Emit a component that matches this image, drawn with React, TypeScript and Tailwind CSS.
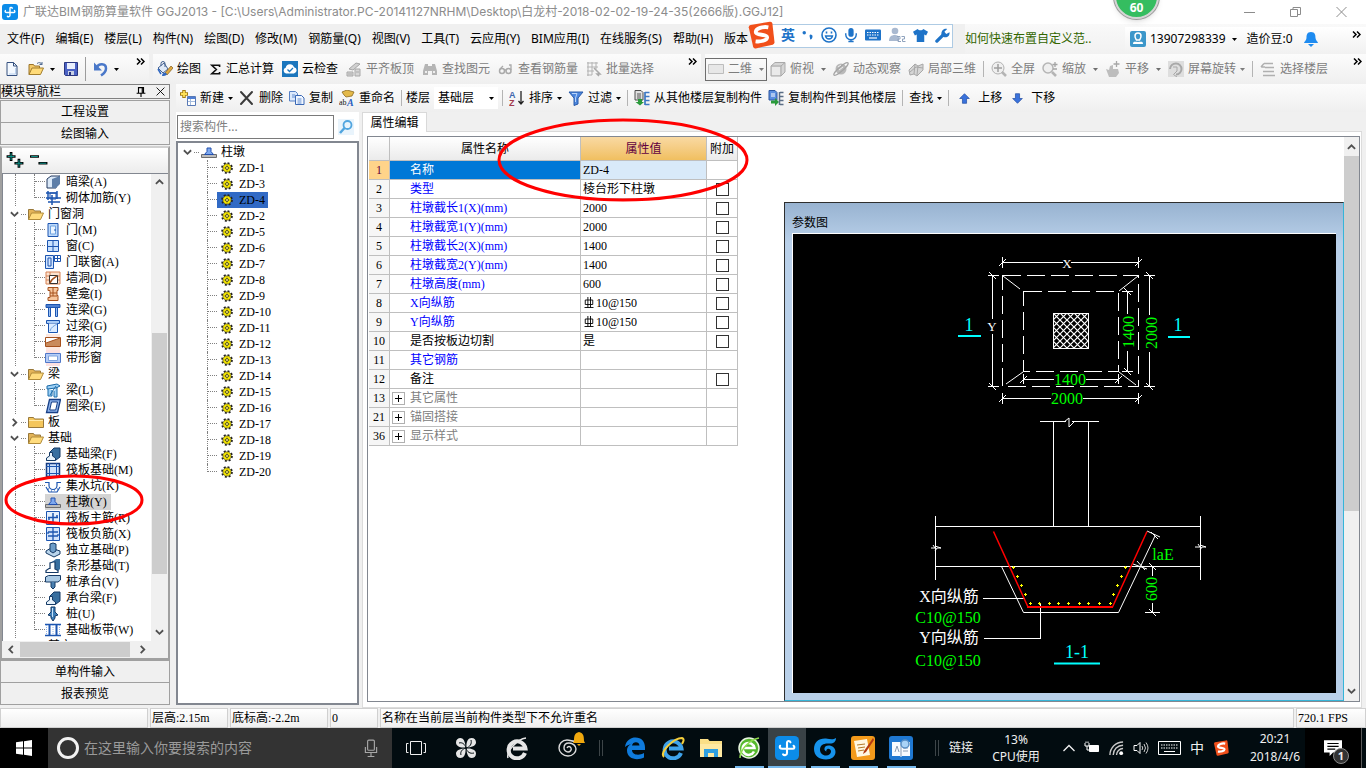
import { useState } from 'react';
import type { ReactNode } from 'react';

const Svg = ({ children, className = 'h-4 w-4' }: { children: ReactNode; className?: string }) => (
  <svg className={`shrink-0 ${className}`} viewBox="0 0 16 16" fill="none" aria-hidden="true">{children}</svg>
);

const Caret = () => (
  <svg className="h-[3px] w-[5px] shrink-0" viewBox="0 0 5 3" aria-hidden="true"><path d="M0 0h5L2.5 3z" fill="currentColor" /></svg>
);

const More = () => (
  <svg className="h-[7px] w-[9px] shrink-0" viewBox="0 0 9 7" fill="none" stroke="#000" strokeWidth="1.5" aria-hidden="true">
    <path d="M1 .5l3 3-3 3M5 .5l3 3-3 3" />
  </svg>
);

const Sep = () => <span className="h-4 w-px shrink-0 bg-[#b4b4b4]" />;

const Chevron = ({ dir, className = 'h-[9px] w-[9px]' }: { dir: 'up' | 'down' | 'left' | 'right'; className?: string }) => {
  const paths = { up: 'M1 6.5l4-4 4 4', down: 'M1 2.5l4 4 4-4', left: 'M6.5 1l-4 4 4 4', right: 'M3 1l4 4-4 4' };
  return (
    <svg className={`shrink-0 ${className}`} viewBox="0 0 10 10" fill="none" stroke="#505050" strokeWidth="2" aria-hidden="true">
      <path d={paths[dir]} />
    </svg>
  );
};

const Logo = ({ className }: { className?: string }) => (
  <Svg className={className}>
    <rect width="16" height="16" rx="3" fill="#0c8ce9" />
    <path d="M10.300 4.200C10 3.200 8 2.800 8 4.500V11.300c0 1.500-1.800 1.900-2.600.9M3.400 6.500C2.600 8 3.600 8.500 4.800 8.500h6.900c1.400 0 1.500-1.300.7-2" stroke="#fff" strokeWidth="1.400" strokeLinecap="round" />
  </Svg>
);

const Sogou = ({ className }: { className?: string }) => (
  <Svg className={className}>
    <path d="M1 3.500Q1 2.500 2 2.300L13 .4q1.300-.2 1.500 1l1.200 10.500q.1 1.300-1 1.600L5 15.700q-1.200.2-1.500-1z" fill="#f1501b" />
    <path d="M12.200 3.600C9 3 5.200 4.300 5 6.200c-.1 2.300 6.600 1 6.500 3.200-.2 1.700-3.700 2.600-6.600 2.200" stroke="#fff" strokeWidth="2.200" />
  </Svg>
);

const DocIcon = () => <Svg><path d="M3 1.500h6.500L13 5v9.500H3z" fill="#f4f9ff" stroke="#35507f" /><path d="M9.500 1.500V5H13" stroke="#35507f" /><path d="M5 13h6.500V7" stroke="#b9d0ee" /></Svg>;
const OpenIcon = () => (
  <Svg><path d="M1 13.500V3.500h4.500l1 1.500h5v2" fill="#f3c969" stroke="#9b742a" /><path d="M1 13.500L4 7h11.500l-3 6.500z" fill="#ffdb79" stroke="#a27d2c" /><path d="M9 2.500c2-1.500 4-1 5 1m0 0V1m0 2.500h-2.500" stroke="#4f6a91" /></Svg>
);
const SaveIcon = () => <Svg><path d="M1.500 1.500h13v13h-12l-1-1z" fill="#4b62c4" stroke="#29357f" /><path d="M4 2h8v6H4z" fill="#e9effc" /><path d="M5 10h6v4H5z" fill="#c8d0e4" /><path d="M6 11h2v3H6z" fill="#29357f" /></Svg>;
const UndoIcon = () => <Svg><path d="M2 1.500v8h8z" fill="#4a78c9" /><path d="M4.500 7c2-5 9.500-5 9.500.5 0 3-2 5-5 7" stroke="#4a78c9" strokeWidth="2.500" /></Svg>;
const PaintIcon = () => (
  <Svg><path d="M1 7l6-5 4 6-5 4z" fill="#dfe9f7" stroke="#42608f" /><path d="M4 5V2.500a2 2 0 014 0V6" stroke="#42608f" /><path d="M8 12l6-7 2 2-6 7z" fill="#e1aa3e" stroke="#7c5a20" strokeWidth=".7" /><path d="M5 15c0-3 2-4 4-3l1 1c-1 2-3 2-5 2z" fill="#2f67c1" /><path d="M1 8l3 5" stroke="#2f67c1" strokeWidth="1.500" /></Svg>
);
const SigmaIcon = () => <Svg className="h-[15px] w-[13px]"><path d="M13 5V2.800H3.500L9 8l-5.500 5.200H13V11" stroke="#111" strokeWidth="2" /></Svg>;
const CloudIcon = () => <Svg><rect width="16" height="16" fill="#1b76bd" /><path d="M4 12.500a3 3 0 01-.3-5.800 4.300 4.300 0 018.300-.5 3.200 3.200 0 010 6.300z" fill="#fff" /><path d="M5.500 8.500l2 2 3.500-3.500" stroke="#1b76bd" strokeWidth="1.300" /></Svg>;
const SlabTopIcon = () => <Svg><path d="M3 8l7-6 4 1-7 6z" fill="#d0d0d0" stroke="#a5a5a5" /><path d="M1 11h6v4H1zM9 8h5v7H9z" fill="#d6d6d6" stroke="#a7a7a7" /><path d="M2 13h4M10 11h3" stroke="#aaa" /></Svg>;
const BinocIcon = () => <Svg><path d="M3 3h3v2h4V3h3l2 7v4h-5v-4H6v4H1v-4z" fill="#b5b5b5" /><path d="M3 11h2M11 11h2" stroke="#eee" strokeWidth="2" /></Svg>;
const GlassesIcon = () => <Svg><circle cx="4" cy="10" r="2.500" stroke="#aaa" strokeWidth="1.500" /><circle cx="10.500" cy="10" r="2.500" stroke="#aaa" strokeWidth="1.500" /><path d="M2 8l3-3M13 9V4h-2M6 9h2" stroke="#aaa" strokeWidth="1.300" /></Svg>;
const BatchIcon = () => <Svg><path d="M1 2h11M1 6h11M1 10h7M1 14h5M2 1v14M6 1v13M10 1v7" stroke="#b2b2b2" /><path d="M8 7l6 6h-3l2 2" stroke="#a8a8a8" strokeWidth="1.500" /></Svg>;
const PlaneIcon = () => <Svg><path d="M.5 3.500h15v9H.5z" fill="#e7e7e7" stroke="#bdbdbd" /></Svg>;
const CubeIcon = () => <Svg><path d="M1 5l4-3.500h10V11l-4 4H1z" fill="#d5d5d5" stroke="#a9a9a9" /><path d="M1 5h10v10M11 5l4-3.500" stroke="#a9a9a9" /><path d="M2 6h8v8H2z" fill="#eaeaea" /></Svg>;
const OrbitIcon = () => <Svg><circle cx="8" cy="8" r="5.500" fill="#b9b9b9" /><path d="M1 14c-2-2 12-14 14-12s-12 14-14 12z" stroke="#a4a4a4" strokeWidth="1.300" /><path d="M5 6l3-2M6 9l4-3" stroke="#eee" /></Svg>;
const LocalIcon = () => <Svg><path d="M1 9l6-6 3 2 5-2v6l-6 6-3-2-4 1z" fill="#d6d6d6" stroke="#a8a8a8" /><path d="M7 3l-1 10M10 5l-1 9M2 11l6-5 7 1" stroke="#a8a8a8" /></Svg>;
const FullIcon = () => <Svg><circle cx="7" cy="7" r="6" fill="#efefef" stroke="#b2b2b2" /><path d="M7 3v8M3 7h8" stroke="#a0a0a0" strokeWidth="1.500" /><path d="M11 11l4 4" stroke="#b5b5b5" strokeWidth="2.500" /></Svg>;
const ZoomIcon = () => <Svg><circle cx="6" cy="7" r="5" fill="#efefef" stroke="#b5b5b5" strokeWidth="1.500" /><path d="M10 11l4 4" stroke="#b5b5b5" strokeWidth="2.500" /><path d="M13 1v5M10.500 3.500h5M11 8h4" stroke="#a5a5a5" strokeWidth="1.300" /></Svg>;
const PanIcon = () => <Svg><path d="M1 8l3 1 1-4 3-1v4l5 0 1 4-3 4H4z" fill="#bdbdbd" /><path d="M11.500 0v6M8.500 3h6" stroke="#a7a7a7" strokeWidth="1.300" /></Svg>;
const RotateIcon = () => <Svg><path d="M0 0h16v16H0z" fill="#dedede" /><path d="M2 8a6 6 0 016-5.500A5.500 5.500 0 0113.500 8 5.500 5.500 0 018 13.500" stroke="#a8a8a8" strokeWidth="2" /><path d="M9 10l-3.500 3.500L9 16M5 6h4v4" stroke="#a8a8a8" /></Svg>;
const FloorIcon = () => <Svg><path d="M4 2.500h9M5 6.500h9M5 10.500h9M5 14.500h10M1 6l3-3.500M1 6h4M3 10.500h2M3 14.500h2" stroke="#b0b0b0" strokeWidth="1.500" /></Svg>;
const NewIcon = () => <Svg><path d="M4 0v8M0 4h8" stroke="#a57f14" strokeWidth="3.500" /><path d="M4 1v6M1 4h6" stroke="#ffe259" strokeWidth="1.800" /><path d="M7.500 6.500h8v9h-8z" fill="#fff" stroke="#5879b5" /><path d="M8 7h7v2H8z" fill="#4f7fd4" /><path d="M8 11.500h7M10.500 9v6" stroke="#a5bcde" /></Svg>;
const DeleteIcon = () => <Svg><path d="M2 2l11 12M13 2L2 14" stroke="#3b3b3b" strokeWidth="2" strokeLinecap="round" /></Svg>;
const CopyIcon = () => <Svg><path d="M.5 1.500h6l2 2V11h-8z" fill="#dce9fc" stroke="#5681c6" /><path d="M6.500 5.500h6l2.500 2.500v6.500H6.500z" fill="#f2f7ff" stroke="#3a68b5" /><path d="M8.500 9h4M8.500 11h4M8.500 13h4M3 5h3M3 7h3" stroke="#5f8bd0" /></Svg>;
const RenameIcon = () => (
  <Svg>
    <path d="M3 2l5-2 7 2-2 4-6 1-2-2z" fill="#e3b94a" stroke="#8b6a20" strokeWidth=".8" />
    <text x="0" y="15" fontSize="8" fontFamily="Liberation Serif" fill="#111">ab</text>
    <text x="8" y="15.500" fontSize="10" fontWeight="700" fontStyle="italic" fontFamily="Liberation Serif" fill="#2a5fc0">A</text>
  </Svg>
);
const SortIcon = () => (
  <Svg>
    <text x="0" y="7.500" fontSize="9" fontWeight="700" fontFamily="Liberation Sans" fill="#3e67ad">A</text>
    <text x="0" y="15.500" fontSize="9" fontWeight="700" fontFamily="Liberation Sans" fill="#a13a4e">Z</text>
    <path d="M12 1v12M9.500 11l2.500 3 2.500-3" stroke="#222" strokeWidth="1.300" />
  </Svg>
);
const FilterIcon = () => <Svg><path d="M1 2h14l-5 6v6l-4 1.500V8z" fill="#4c86dd" stroke="#295aa9" /><path d="M4 3.500h5L7.500 8v4" stroke="#b9d5fb" /></Svg>;
const CopyFromIcon = () => (
  <Svg><path d="M1 .5h6l2 2V10H1z" fill="#e0e0e0" stroke="#4f4f4f" /><path d="M3 4h4M3 6h4M3 8h4" stroke="#555" /><path d="M6 15.500L1.500 12H4V9h4v3h2z" fill="#2a9a3b" /><path d="M11 2.500h4.500M11 6.500h4.500M11 10.500h4.500M11 14.500h4.500M11 2v13" stroke="#3c78c4" strokeWidth="1.700" /></Svg>
);
const CopyToIcon = () => (
  <Svg><path d="M1 .5h6l2 2V10H1z" fill="#5a8fe0" stroke="#2c57a0" /><path d="M3 4h4M3 6h4" stroke="#fff" /><path d="M3 10.500h4V8l4 4-4 4v-2.500H3z" fill="#2a9a3b" /><path d="M12 2.500h3.500M12 6.500h3.500M12 10.500h3.500M12 14.500h3.500M11.500 2v13" stroke="#5a6d85" strokeWidth="1.500" /></Svg>
);
const UpIcon = () => <Svg className="h-[11px] w-[11px]"><path d="M8 1l7 7h-4v7H5V8H1z" fill="#3a72dc" stroke="#1f4aa0" /></Svg>;
const DownIcon = () => <Svg className="h-[11px] w-[11px]"><path d="M8 15l7-7h-4V1H5v7H1z" fill="#3a72dc" stroke="#1f4aa0" /></Svg>;
const FolderOpen = () => <Svg><path d="M.5 13.500v-10h5l1 1.500h6v2.500" fill="#e3b458" stroke="#98783a" /><path d="M.5 13.500L3.500 7h12l-3 6.500z" fill="#ffdc7e" stroke="#b08b3a" /></Svg>;
const FolderClosed = () => <Svg><path d="M.5 13.500v-10h5l1 1.500h9v8.500z" fill="#f4c65b" stroke="#98783a" /><path d="M1 6.500h14" stroke="#ffe9a8" /></Svg>;
const PierIcon = () => <Svg><path d="M.5 10.500h15v3H.5z" fill="#bcbcbc" stroke="#6d6d6d" /><path d="M3.500 10.500l2.500-3V4h4v3.500l2.500 3z" fill="#7ea8ee" stroke="#2350ae" /></Svg>;
const GearIcon = () => (
  <Svg className="h-3 w-3">
    <circle cx="8" cy="8" r="6.500" stroke="#222" strokeWidth="2.600" strokeDasharray="2.600 2.500" />
    <circle cx="8" cy="8" r="5.600" fill="#f8ea00" stroke="#222" strokeWidth=".7" />
    <path d="M8 3v10M3 8h10" stroke="#8a7d00" strokeWidth=".7" />
    <circle cx="8" cy="8" r="2" fill="#fff46b" stroke="#222" />
  </Svg>
);

const b = '#1c55b0';
const o = '#a5501c';
const navIcons: Record<string, ReactNode> = {
  beam: <Svg><path d="M2 5l4-3h9l-4 3v9H2z" fill="#dbe9f8" stroke="#23395f" /><path d="M7 5l8-3v8l-4 4H7z" fill="#5d7ea8" /></Svg>,
  brick: <Svg><path d="M1 3h11M1 8h15M3 12h12M3 1v9M12 1v8M7 5v10" stroke={b} strokeWidth="1.500" /><path d="M5 3h6v6H5z" stroke={b} /></Svg>,
  door: <Svg><path d="M3 1.500h10v13H3z" fill="#bcd9fb" stroke={b} /><path d="M5.500 4h5v8h-5z" fill="#eaf4ff" stroke="#6ea3e0" /><path d="M10 7v2" stroke={b} /></Svg>,
  window: <Svg><path d="M2.500 2.500h11v11h-11z" fill="#c9e2ff" stroke={b} /><path d="M8 2v12M2 8.500h12" stroke={b} /></Svg>,
  doorWindow: <Svg><path d="M.5 1.500h8v13h-8z" fill="#d4e6ff" stroke={b} /><path d="M9.500 1.500h6v6h-6zM12.500 1v7M9 4.500h7M3 4h3v8H3z" stroke={b} /></Svg>,
  wallHole: <Svg><path d="M1 2h14v12H1z" fill="#fbe3d0" stroke="#d78153" /><path d="M1 6h14M1 10h14M5 2v4M10 10v4" stroke="#d78153" /><path d="M4.500 5.500h8v8h-8z" fill="#fff" stroke="#333" /><path d="M5 13c1-4 4-5 7-7" stroke={o} strokeWidth="1.500" /></Svg>,
  niche: <Svg><path d="M3 1.500h10v3h-1v5h1v5H3v-3h2v-7H3z" fill="#f7c79e" stroke={o} /><path d="M5 7h7M5 10h7M8 2v8" stroke={o} /></Svg>,
  link: <Svg><path d="M1 2.500h14v3H1z" fill="#4c7fd0" stroke={b} /><path d="M3.500 6v8.500h2V6M10.500 6v8.500h2V6" fill="#9cc2f5" stroke={b} /></Svg>,
  lintel: <Svg><path d="M1.500 2.500h13v3h-13z" fill="#a9cbf5" stroke={b} /><path d="M3.500 5.500v9h9v-9" fill="#dcebff" stroke={b} /><path d="M5 13c1-4 4-5 7-7" stroke="#6ea3e0" /></Svg>,
  stripHole: <Svg><path d="M1 0h14v16H1z" fill="#fde8e0" /><path d="M.5 3.500h15v9H.5z" fill="#fff" stroke={o} /><path d="M1 12V9l14-5v8z" fill="#c98b5c" /><path d="M1 9l14-5" stroke={o} /></Svg>,
  stripWindow: <Svg><path d="M1 0h14v16H1z" fill="#fde1e1" /><path d="M.5 3.500h15v9H.5z" fill="#b5cdf7" stroke="#5078c8" /><path d="M3.500 6h9v4.500h-9z" fill="#fff" stroke="#7fa2de" /></Svg>,
  beamL: <Svg><path d="M2 4l10-2 3 2-4 2-9 1zM3 7v7h4V8M9 9v6h3V5" fill="#9cd0f6" stroke="#1b6aa8" /><path d="M5 13l6-9" stroke="#1b6aa8" /></Svg>,
  ring: <Svg><path d="M4.500 1.500h11l-3 13h-11z" fill="#8eb4ec" stroke="#173f86" strokeWidth="1.300" /><path d="M6.500 4h6l-1.800 8H4.700z" fill="#fff" stroke="#173f86" /></Svg>,
  foundBeam: <Svg><path d="M1 14l4-4V6l4-4h6v9l-4 3z" fill="#386f9f" stroke="#153a66" /><path d="M1.500 14.500V12l3-2V6.500h3V10l3 2v2.500z" fill="#e8f3fb" stroke="#153a66" /></Svg>,
  raft: <Svg><path d="M1.500 1.500h13v13h-13z" fill="#cfe2fb" stroke="#153a80" strokeWidth="1.500" /><path d="M4.500 4.500h7v7h-7zM4.500 1v14M11.500 1v14M1 4.500h14M1 11.500h14" stroke={b} /></Svg>,
  pit: <Svg><path d="M0 4.500h4v3a4 4 0 008 0v-3h4M1 9l3 5h8l3-5" stroke={b} strokeWidth="1.200" /><path d="M3 11h1M6 13h1M9 12h1M12 11h1" stroke={b} /></Svg>,
  pier: <PierIcon />,
  rebarMain: <Svg><path d="M1.500 1.500h13v13h-13z" fill="#e6f0fd" stroke={b} /><path d="M8 3v10M3 7.500h10M4 7v3M12 5v3" stroke={b} strokeWidth="1.500" /></Svg>,
  rebarNeg: <Svg><path d="M1.500 1.500h13v13h-13z" fill="#d3e4fb" stroke={b} /><path d="M8 1v14M3 6h10M3 10h10M3 6v2M13 10v-2" stroke={b} strokeWidth="1.300" /></Svg>,
  isolated: <Svg><path d="M1 9l5-3 9 3v3l-6 3-8-4z" fill="#b9d5ec" stroke="#153a66" /><path d="M5 2l3-1 3 1v7l-3 2-3-2z" fill="#6c9cc8" stroke="#153a66" /></Svg>,
  strip: <Svg><path d="M7 4l4-3h4v10l-3 3z" fill="#386f9f" /><path d="M1 14.500v-2l3-2h1V5l3-1h2v7l3 1.500v2z" fill="#fff" stroke="#153a66" strokeWidth="1.200" /></Svg>,
  cap: <Svg><path d="M.5 3l3-1.500h12V6L13 8H.5z" fill="#a9c9e4" stroke="#153a66" /><path d="M6 8v5l2 2 2-2V8" fill="#4a80b0" stroke="#153a66" /></Svg>,
  pile: <Svg><path d="M6 1h4v5l3 3-3 1v2l-2 3-2-3v-2L3 9l3-3z" fill="#3d7eb8" stroke="#153a66" /><path d="M7.500 2v9" stroke="#c8e4fb" /></Svg>,
  band: <Svg><path d="M0 2.500h16M0 13.500h16" stroke={b} strokeWidth="1.500" /><path d="M4.500 3v10M11.500 3v10" stroke={b} strokeWidth="2" /><path d="M8 3v10M1.500 3v10M14.500 3v10" stroke="#8eb4ec" strokeDasharray="1 1" /></Svg>,
};

type NavItem = { label: string; icon?: string; last?: boolean; open?: boolean };

const navItems: NavItem[] = [
  { label: '暗梁(A)', icon: 'beam' },
  { label: '砌体加筋(Y)', icon: 'brick', last: true },
  { label: '门窗洞', open: true },
  { label: '门(M)', icon: 'door' },
  { label: '窗(C)', icon: 'window' },
  { label: '门联窗(A)', icon: 'doorWindow' },
  { label: '墙洞(D)', icon: 'wallHole' },
  { label: '壁龛(I)', icon: 'niche' },
  { label: '连梁(G)', icon: 'link' },
  { label: '过梁(G)', icon: 'lintel' },
  { label: '带形洞', icon: 'stripHole' },
  { label: '带形窗', icon: 'stripWindow', last: true },
  { label: '梁', open: true },
  { label: '梁(L)', icon: 'beamL' },
  { label: '圈梁(E)', icon: 'ring', last: true },
  { label: '板', open: false },
  { label: '基础', open: true },
  { label: '基础梁(F)', icon: 'foundBeam' },
  { label: '筏板基础(M)', icon: 'raft' },
  { label: '集水坑(K)', icon: 'pit' },
  { label: '柱墩(Y)', icon: 'pier' },
  { label: '筏板主筋(R)', icon: 'rebarMain' },
  { label: '筏板负筋(X)', icon: 'rebarNeg' },
  { label: '独立基础(P)', icon: 'isolated' },
  { label: '条形基础(T)', icon: 'strip' },
  { label: '桩承台(V)', icon: 'cap' },
  { label: '承台梁(F)', icon: 'foundBeam' },
  { label: '桩(U)', icon: 'pile' },
  { label: '基础板带(W)', icon: 'band', last: true },
  { label: '其它', open: false },
];

const components = [1, 3, 4, 2, 5, 6, 7, 8, 9, 10, 11, 12, 13, 14, 15, 16, 17, 18, 19, 20];

const menus = ['文件(F)', '编辑(E)', '楼层(L)', '构件(N)', '绘图(D)', '修改(M)', '钢筋量(Q)', '视图(V)', '工具(T)', '云应用(Y)', 'BIM应用(I)', '在线服务(S)', '帮助(H)', '版本'];

type Row = { no: number; name: string; value?: string; check?: boolean; tone: 'sel' | 'blue' | 'black' | 'gray'; rebar?: boolean };

const rows: Row[] = [
  { no: 1, name: '名称', value: 'ZD-4', tone: 'sel' },
  { no: 2, name: '类型', value: '棱台形下柱墩', check: true, tone: 'blue' },
  { no: 3, name: '柱墩截长1(X)(mm)', value: '2000', check: true, tone: 'blue' },
  { no: 4, name: '柱墩截宽1(Y)(mm)', value: '2000', check: true, tone: 'blue' },
  { no: 5, name: '柱墩截长2(X)(mm)', value: '1400', check: true, tone: 'blue' },
  { no: 6, name: '柱墩截宽2(Y)(mm)', value: '1400', check: true, tone: 'blue' },
  { no: 7, name: '柱墩高度(mm)', value: '600', check: true, tone: 'blue' },
  { no: 8, name: 'X向纵筋', value: '10@150', check: true, tone: 'blue', rebar: true },
  { no: 9, name: 'Y向纵筋', value: '10@150', check: true, tone: 'blue', rebar: true },
  { no: 10, name: '是否按板边切割', value: '是', check: true, tone: 'black' },
  { no: 11, name: '其它钢筋', tone: 'blue' },
  { no: 12, name: '备注', check: true, tone: 'black' },
  { no: 13, name: '其它属性', tone: 'gray' },
  { no: 21, name: '锚固搭接', tone: 'gray' },
  { no: 36, name: '显示样式', tone: 'gray' },
];

const tones = {
  sel: 'bg-[#0078d7] text-white',
  blue: 'text-[#0000ff]',
  black: 'text-black',
  gray: 'text-[#808080]',
};

function Tool({ icon, label, caret, off }: { icon?: ReactNode; label: string; caret?: boolean; off?: boolean }) {
  return (
    <button className={`flex shrink-0 items-center gap-1 whitespace-nowrap ${off ? 'text-[#7d7d7d]' : 'text-black'}`}>
      {icon}
      {label}
      {caret && <Caret />}
    </button>
  );
}

function TitleBar() {
  return (
    <header className="flex h-6 shrink-0 items-center bg-white pl-0.5 text-[#8c8c8c]">
      <Logo className="h-4 w-4" />
      <h1 className="ml-[5px] flex-1 truncate font-['Inter','Noto_Sans_CJK_SC',sans-serif]">广联达BIM钢筋算量软件 GGJ2013 - [C:\Users\Administrator.PC-20141127NRHM\Desktop\白龙村-2018-02-02-19-24-35(2666版).GGJ12]</h1>
      <div className="flex gap-[35px] pr-[19px] text-[#8c8c8c]">
        <button aria-label="最小化"><svg className="h-3 w-[11px]" viewBox="0 0 11 12" stroke="currentColor"><path d="M0 6.500h11" /></svg></button>
        <button aria-label="还原"><svg className="h-3 w-[11px]" viewBox="0 0 11 12" fill="none" stroke="currentColor"><path d="M.5 3.500h7v7h-7zM3 3V1.500h7.500v7H8" /></svg></button>
        <button aria-label="关闭"><svg className="h-3 w-[11px]" viewBox="0 0 11 12" stroke="currentColor"><path d="M.5 1l10 10M10.500 1l-10 10" /></svg></button>
      </div>
    </header>
  );
}

function ImeBar() {
  return (
    <div className="absolute top-[21px] left-[747px] flex h-7 w-[206px] items-center">
      <div className="absolute inset-x-0 top-[3px] ml-3 h-6 border border-[#aecbe4] bg-white" />
      <Sogou className="relative h-7 w-7" />
      <div className="relative ml-[6px] flex flex-1 items-center gap-[7px] text-[#1e73c8]">
        <span className="text-sm font-bold">英</span>
        <Svg className="h-4 w-3"><circle cx="3" cy="5" r="2.300" fill="currentColor" /><path d="M10 9a2 2 0 014 1c0 2-1 4-3 4" fill="currentColor" /></Svg>
        <Svg><circle cx="8" cy="8" r="7" stroke="currentColor" strokeWidth="1.600" /><path d="M4.500 9c1 4 6 4 7 0z" stroke="currentColor" strokeWidth="1.300" /><path d="M5.500 4.500v2M10.500 4.500v2" stroke="currentColor" strokeWidth="1.600" /></Svg>
        <Svg className="h-4 w-[14px]"><rect x="5" y="0" width="6" height="10" rx="3" fill="currentColor" /><path d="M2 6v1.500a6 6 0 0012 0V6M8 13v3M5 15.500h6" stroke="currentColor" strokeWidth="1.600" /></Svg>
        <Svg><rect y="2.500" width="16" height="11" rx="1" fill="currentColor" /><path d="M2 5.500h12M2 8h12" stroke="#fff" strokeWidth="1.200" strokeDasharray="1.500 1" /><path d="M4 11h8" stroke="#fff" strokeWidth="1.200" /></Svg>
        <Svg className="h-4 w-[18px]"><circle cx="6" cy="4" r="3.300" fill="#a9b9d0" /><path d="M0 14c0-4 2-6 6-6 2 0 4 1 4 2v4z" fill="#a9b9d0" /><path d="M8 9.500h3v2.500H9v2.500h3M12.500 9.500h3V12h-2v2.500h3" stroke="#8fa2bd" /></Svg>
        <Svg className="h-[15px] w-[15px]"><path d="M5 1c1 2 5 2 6 0l5 3-2 4-2-1v8H4V7L2 8 0 4z" fill="currentColor" /></Svg>
        <Svg className="h-[15px] w-[15px]"><path d="M2 14l7-7" stroke="currentColor" strokeWidth="3.500" strokeLinecap="round" /><path d="M13 1l-3 3 2 2.500 3.500-2c.5 4-3 6.500-6.500 5L7 7.500C6 3 9.500 0 13 1z" fill="currentColor" /></Svg>
      </div>
    </div>
  );
}

function MenuBar() {
  return (
    <div className="flex h-[30px] shrink-0 items-center">
      <nav className="flex min-w-0 flex-1 gap-[11px] pl-[7px] whitespace-nowrap text-black">
        {menus.map((m) => <button key={m}>{m}</button>)}
      </nav>
      <div className="flex h-full w-[401px] shrink-0 items-center bg-linear-to-b from-[#f9f9f9] to-[#f1f1f1]">
        <a href="#help" className="w-[160px] text-[#336600]">如何快速布置自定义范..</a>
        <div className="flex flex-1 items-center bg-linear-to-b from-white to-[#f2f2f2] py-1 pl-[5px] text-black">
          <Svg><rect width="16" height="16" rx="2" fill="#3c97ca" /><path d="M5 5a3 3 0 016 0c0 2-1 3-1.500 4h-3C6 8 5 7 5 5z" stroke="#fff" strokeWidth="1.500" /><path d="M3 13c0-3 2-2 5-2s5-1 5 2z" fill="#fff" /></Svg>
          <span className="ml-1 mr-1.5">13907298339</span>
          <Caret />
          <span className="ml-2.5 mr-2.5">造价豆:0</span>
          <Svg><path d="M8 1c4 0 4.500 3 4.500 6 0 2 2.500 4 2.500 5H1c0-1 2.500-3 2.500-5C3.500 4 4 1 8 1z" fill="#1e8bf0" /><path d="M5 13h6l-3 3z" fill="#1e8bf0" /></Svg>
          <span className="ml-auto mr-[5px] self-start"><More /></span>
        </div>
      </div>
    </div>
  );
}

function Toolbar() {
  const bar = 'flex h-full items-center bg-linear-to-b from-[#fcfcfc] to-[#efefef]';
  return (
    <div className="flex h-[30px] shrink-0 gap-1">
      <div className={`${bar} w-[149px] shrink-0 pl-1`}>
        <button aria-label="新建工程"><DocIcon /></button>
        <button aria-label="打开" className="ml-2 flex items-center gap-1.5"><OpenIcon /><Caret /></button>
        <button aria-label="保存" className="ml-2"><SaveIcon /></button>
        <span className="ml-1.5 h-6 w-px bg-[#9c9c9c]" />
        <button aria-label="撤销" className="ml-1.5 flex items-center gap-1.5"><UndoIcon /><Caret /></button>
        <span className="ml-auto self-start pt-1 pr-1"><More /></span>
      </div>
      <div className={`${bar} w-[548px] shrink-0 gap-2 pl-1`}>
        <Tool icon={<PaintIcon />} label="绘图" />
        <Tool icon={<SigmaIcon />} label="汇总计算" />
        <Tool icon={<CloudIcon />} label="云检查" />
        <Tool icon={<SlabTopIcon />} label="平齐板顶" off />
        <Tool icon={<BinocIcon />} label="查找图元" off />
        <Tool icon={<GlassesIcon />} label="查看钢筋量" off />
        <Tool icon={<BatchIcon />} label="批量选择" off />
        <span className="ml-auto self-start pt-1 pr-1"><More /></span>
      </div>
      <div className={`${bar} min-w-0 flex-1 gap-[7px] overflow-hidden`}>
        <button className="-mr-1 flex h-[23px] w-[62px] shrink-0 items-center gap-1 border border-[#6e6e6e] px-[2px] text-[#7d7d7d]">
          <PlaneIcon />二维<span className="ml-auto"><Caret /></span>
        </button>
        <Tool icon={<CubeIcon />} label="俯视" off />
        <span className="text-[#6e6e6e]"><Caret /></span>
        <Tool icon={<OrbitIcon />} label="动态观察" off />
        <Tool icon={<LocalIcon />} label="局部三维" off />
        <Sep />
        <Tool icon={<FullIcon />} label="全屏" off />
        <Tool icon={<ZoomIcon />} label="缩放" off />
        <span className="text-[#6e6e6e]"><Caret /></span>
        <Tool icon={<PanIcon />} label="平移" off />
        <span className="text-[#6e6e6e]"><Caret /></span>
        <Tool icon={<RotateIcon />} label="屏幕旋转" caret off />
        <Sep />
        <Tool icon={<FloorIcon />} label="选择楼层" off />
        <span className="ml-auto self-start pt-1 pr-1"><More /></span>
      </div>
    </div>
  );
}

function NavTree() {
  const [current, setCurrent] = useState('pier');
  return (
    <ul className="min-w-0 flex-1 overflow-hidden">
      {navItems.map((item, i) =>
        item.icon ? (
          <li key={i} className="flex h-4 items-center pl-[11px]">
            <span className="h-4 w-[19px] shrink-0 border-l border-dotted border-[#808080]" />
            <span className={`flex w-[11px] shrink-0 self-start border-l border-dotted border-[#808080] ${item.last ? 'h-2' : 'h-4'}`}>
              <span className="h-2 w-full border-b border-dotted border-[#808080]" />
            </span>
            <button
              onClick={() => setCurrent(item.icon ?? '')}
              className={`flex h-4 items-center gap-[5px] pr-1 whitespace-nowrap ${item.icon === current ? 'bg-[#d4d4d4]' : ''}`}
            >
              {navIcons[item.icon]}
              {item.label}
            </button>
          </li>
        ) : (
          <li key={i} className="flex h-4 items-center pl-1.5 whitespace-nowrap">
            <Chevron dir={item.open ? 'down' : 'right'} />
            <span className="mx-0.5 w-[5px] border-b border-dotted border-[#808080]" />
            {item.open ? <FolderOpen /> : <FolderClosed />}
            <span className="ml-1">{item.label}</span>
          </li>
        ),
      )}
    </ul>
  );
}

function ModulePanel() {
  const head = 'flex shrink-0 items-center justify-center border border-[#a0a0a0] bg-[#f0f0f0]';
  return (
    <aside className="flex w-[170px] shrink-0 flex-col pb-[3px] font-['Liberation_Serif','Noto_Sans_CJK_SC',serif]">
      <div className="flex h-[15px] shrink-0 items-center border border-[#808080] leading-3">
        <h2 className="flex-1">模块导航栏</h2>
        <button aria-label="固定" className="mr-2.5"><Svg className="h-[10px] w-[10px]"><path d="M4 1h8v9H4zM10 1v9M1 10h14M8 10v6" stroke="#000" strokeWidth="1.800" /></Svg></button>
        <button aria-label="关闭面板" className="mr-1"><Svg className="h-[9px] w-[9px]"><path d="M1 1l14 14M15 1L1 15" stroke="#000" strokeWidth="1.600" /></Svg></button>
      </div>
      <button className={`${head} mt-px h-[23px]`}>工程设置</button>
      <button className={`${head} -mt-px h-[23px]`}>绘图输入</button>
      <div className="mt-px flex min-h-0 flex-1 flex-col border-2 border-[#a0a0a0] border-t-[#d0d0d0]">
        <div className="flex h-[25px] shrink-0 items-center gap-1.5 bg-linear-to-b from-white to-[#ececec] pl-1">
          <button aria-label="全部展开"><Svg className="h-[18px] w-[18px]"><path d="M4.500 0v8M.5 4h8M11.500 6v8M7.500 10h8" stroke="#000" strokeWidth="2.400" /><path d="M4.500 1v6M1.500 4h6M11.500 7v6M8.500 10h6" stroke="#0d8f86" strokeWidth="1" /></Svg></button>
          <button aria-label="全部折叠"><Svg className="h-[18px] w-[18px]"><path d="M0 4h8M7.500 10h8" stroke="#000" strokeWidth="2.400" /><path d="M1 4h6M8.500 10h6" stroke="#0d8f86" strokeWidth="1" /></Svg></button>
        </div>
        <div className="flex min-h-0 flex-1 border-t border-l border-[#828790] bg-white pl-px">
          <NavTree />
          <div className="flex w-[17px] shrink-0 flex-col items-center bg-[#f0f0f0] py-1">
            <Chevron dir="up" />
            <div className="mt-[146px] h-[241px] w-[15px] bg-[#cdcdcd]" />
            <span className="mt-auto"><Chevron dir="down" /></span>
          </div>
        </div>
        <div className="flex h-[17px] shrink-0 items-center bg-[#f0f0f0] pl-[5px]">
          <Chevron dir="left" />
          <div className="ml-1 h-[15px] w-[110px] bg-[#cdcdcd]" />
          <span className="ml-2"><Chevron dir="right" /></span>
        </div>
      </div>
      <button className={`${head} h-[23px]`}>单构件输入</button>
      <button className={`${head} -mt-px h-[23px]`}>报表预览</button>
    </aside>
  );
}

function ComponentPanel() {
  const [selected, setSelected] = useState(4);
  return (
    <section className="flex w-[183px] shrink-0 flex-col pb-[3px] font-['Liberation_Serif','Noto_Sans_CJK_SC',serif]">
      <div className="flex h-[29px] shrink-0 items-center bg-white pl-px">
        <input
          aria-label="搜索构件"
          placeholder="搜索构件..."
          className="h-6 w-[157px] border border-[#7a7a7a] bg-white px-0.5 font-['Noto_Sans','Noto_Sans_CJK_SC',sans-serif] placeholder:text-[#808080]"
        />
        <button aria-label="搜索" className="ml-1"><Svg><path d="M0 0h16v16H0z" fill="#e9f4fc" /><circle cx="9.500" cy="6" r="4" stroke="#51a5df" strokeWidth="1.800" /><path d="M6.500 9L2 14" stroke="#51a5df" strokeWidth="2.500" /></Svg></button>
      </div>
      <ul className="flex-1 border-2 border-[#828790] bg-white pt-px">
        <li className="flex h-4 items-center pl-[5px]">
          <Chevron dir="down" />
          <span className="mx-0.5 w-[5px] border-b border-dotted border-[#808080]" />
          <PierIcon />
          <span className="ml-1">柱墩</span>
        </li>
        {components.map((n) => (
          <li key={n} className="flex h-4 pl-[29px]">
            <span className={`flex w-[10px] shrink-0 border-l border-dotted border-[#808080] ${n === 20 ? 'h-2' : 'h-4'}`}>
              <span className="h-2 w-full border-b border-dotted border-[#808080]" />
            </span>
            <button
              onClick={() => setSelected(n)}
              className={`flex h-4 w-[51px] items-center gap-1.5 pl-1 whitespace-nowrap ${n === selected ? 'bg-[#316ac5]' : ''}`}
            >
              <GearIcon />
              ZD-{n}
            </button>
          </li>
        ))}
      </ul>
    </section>
  );
}

function PropertyTable() {
  const cell = 'border-r border-b border-[#bfbfbf] p-0';
  return (
    <table className="w-[369px] table-fixed border-separate border-spacing-0 text-black">
      <colgroup>
        <col className="w-[21px]" />
        <col className="w-[191px]" />
        <col className="w-[126px]" />
        <col className="w-[31px]" />
      </colgroup>
      <thead>
        <tr className="h-6">
          <th className={`${cell} bg-linear-to-b from-white to-[#ebebeb]`} />
          <th className={`${cell} bg-linear-to-b from-white to-[#ebebeb] font-normal`}>属性名称</th>
          <th className={`${cell} bg-linear-to-b from-[#f9d9a2] to-[#f0bf5f] font-normal text-[#600040]`}>属性值</th>
          <th className={`${cell} bg-linear-to-b from-white to-[#ebebeb] font-normal`}>附加</th>
        </tr>
      </thead>
      <tbody>
        {rows.map((r) => (
          <tr key={r.no} className="h-[19px]">
            <td className={`${cell} text-center leading-4 ${r.no === 1 ? 'bg-[#ffd48a] text-[#600040]' : 'bg-[#f6f6f6]'}`}>{r.no}</td>
            <td className={`${cell} ${tones[r.tone]}`}>
              <div className="flex h-[18px] items-center pl-0.5">
                <span className="w-[18px]">
                  {r.tone === 'gray' && (
                    <button aria-label="展开" className="block h-[13px] w-[13px] border border-[#b0b0b0] text-black">
                      <svg className="h-[11px] w-[11px]" viewBox="0 0 11 11" stroke="#000" shapeRendering="crispEdges"><path d="M2 5.500h7M5.500 2v7" /></svg>
                    </button>
                  )}
                </span>
                {r.name}
              </div>
            </td>
            <td className={`${cell} ${r.no === 1 ? 'bg-[#d9eaf9]' : ''}`}>
              <div className="flex h-[18px] items-center gap-px pl-0.5">
                {r.rebar && (
                  <Svg className="h-3 w-3"><path d="M3 4h10v6H3zM6.500 0v14M10 0v14M2 14h12" stroke="#000" strokeWidth="1.200" /></Svg>
                )}
                {r.value}
              </div>
            </td>
            <td className={cell}>
              {r.check && (
                <input type="checkbox" aria-label={`附加 ${r.name}`} className="mx-auto block h-[13px] w-[13px] appearance-none border border-[#333] bg-white checked:bg-[#0078d7]" />
              )}
            </td>
          </tr>
        ))}
      </tbody>
    </table>
  );
}

const dots = [
  [1030, 604], [1039, 604], [1049, 604], [1058, 604], [1068, 604], [1079, 604], [1088, 604], [1099, 604], [1110, 604],
  [1013, 568], [1017, 577], [1021, 586], [1025, 595], [1125, 568], [1121, 577], [1117, 586], [1113, 595],
];

function Drawing() {
  return (
    <svg
      className="block w-full flex-1 border-t border-l border-white bg-black"
      viewBox="793 235 543 459"
      fill="none"
      stroke="#fff"
      role="img"
      aria-label="柱墩参数图"
    >
      <defs>
        <pattern id="hatch" width="7" height="7" patternUnits="userSpaceOnUse" x="1053" y="314">
          <path d="M0 0l7 7M7 0L0 7" stroke="#fff" strokeWidth="1.200" />
        </pattern>
      </defs>
      <g shapeRendering="crispEdges">
        {/* plan view */}
        <path d="M1002.500 276.500H1138.500V387.500H1002.500z" strokeDasharray="18 6" />
        <path d="M1023.500 292.500H1118.500V372.500H1023.500z" strokeDasharray="18 6" />
        <path d="M1053.500 314.500h35v35h-35z" fill="url(#hatch)" />
        <path d="M1002.500 258v11M1138.500 258v11M1002 263.500h61M1071 263.500h68" />
        <path d="M988 276.500h11M988 387.500h11M992.500 276v44M992.500 335v53" />
        <path d="M1144 276.500h11M1144 387.500h11M1149.500 276v40M1149.500 353v35" />
        <path d="M1122 292.500h11M1122 372.500h11M1127.500 292v23M1127.500 352v20" />
        <path d="M1023.500 375v10M1118.500 375v10M1023 380.500h31M1086 380.500h33" />
        <path d="M1002.500 394v11M1138.500 394v11M1002 399.500h49M1083 399.500h56" />
        {/* section */}
        <path d="M1040 422.500h26M1072 422.500h27M1053.500 422v105M1088.500 422v105" />
        <path d="M935 527.500h266M935 567.500h266M935.500 517v64M1200.500 517v64" />
        <path d="M1152.500 567v10M1152.500 604v9M1145 613.500h15" />
        <path d="M983 599.500h42M984 639.500h56.500V604" />
      </g>
      <path d="M1003 277l17 13M1138 277l-19 15M1006 385l17-12M1136 386l-17-13" />
      <path d="M999 267l7-7M1135 267l7-7M989 273l7 7M989 384l7 7M1146 273l7 7M1146 384l7 7M1124 289l7 7M1124 369l7 7M1020 384l7-7M1115 384l7-7M999 403l7-7M1135 403l7-7M1149 610l7 7M1149 564l7 7" />
      <path d="M1064 423l5-4v9l5-5M931 549h4l-2-3M935 547l6 2h-4l-2 3M1195 548h5l-2-3M1200 546l6 2h-4l-2 3" />
      <path d="M1001.500 567.500l22 46h95L1155 537M1147 532l13 6M1151 533l7 7M1133 565l14 5M1137 562l8 9" />
      <path d="M993.500 532.500L1028 608M1112.500 608L1147 532.500" stroke="#f00" strokeWidth="1.500" />
      <path d="M1027 608h86" stroke="#f00" strokeWidth="2" />
      {dots.map(([x, y]) => <path key={`${x}-${y}`} d={`M${x - 1} ${y + 0.5}h3M${x + 0.5} ${y - 1}v3`} stroke="#ff0" />)}
      <path d="M958 337h23M1168 338h22M1054 664.500h46" stroke="#0ff" strokeWidth="2" />
      <g stroke="none" fontFamily="'Liberation Serif','Noto Sans CJK SC',serif" fontSize="16" textAnchor="middle">
        <g fill="#fff">
          <text x="1067" y="269" fontSize="13">X</text>
          <text x="992" y="332" fontSize="13">Y</text>
          <text x="949" y="603">X向纵筋</text>
          <text x="949" y="644">Y向纵筋</text>
        </g>
        <g fill="#0f0">
          <text x="1070" y="386">1400</text>
          <text x="1067" y="405">2000</text>
          <text transform="translate(1134 333) rotate(-90)">1400</text>
          <text transform="translate(1157 334) rotate(-90)">2000</text>
          <text transform="translate(1157 590) rotate(-90)">600</text>
          <text x="1163" y="561">laE</text>
          <text x="948" y="624">C10@150</text>
          <text x="948" y="667">C10@150</text>
        </g>
        <g fill="#0ff" fontSize="18">
          <text x="969" y="332">1</text>
          <text x="1178" y="332">1</text>
          <text x="1077" y="659">1-1</text>
        </g>
      </g>
    </svg>
  );
}

function EditorPanel() {
  return (
    <section className="flex min-w-0 flex-1 flex-col pr-1 font-['Liberation_Serif','Noto_Sans_CJK_SC',serif]">
      <div className="flex h-5 shrink-0 items-end">
        <button className="h-5 w-[65px] border-t border-r border-l border-[#d9d9d9] bg-white leading-[18px]">属性编辑</button>
        <span className="h-px flex-1 bg-[#d9d9d9]" />
      </div>
      <div className="flex min-h-0 flex-1 border border-t-0 border-[#dcdcdc] bg-white pt-1 pr-px pb-[5px] pl-1">
        <div className="relative flex min-w-0 flex-1 border border-[#828790]">
          <div className="min-w-0 flex-1 pl-px">
            <PropertyTable />
          </div>
          <div className="flex w-[15px] shrink-0 flex-col items-center bg-[#f0f0f0] pt-1.5 pb-[5px]">
            <Chevron dir="up" />
            <div className="mt-1 h-[355px] w-full bg-[#cdcdcd]" />
            <span className="mt-auto"><Chevron dir="down" /></span>
          </div>
          {/* floating parameter window */}
          <div className="absolute right-[15px] bottom-0 flex h-[499px] w-[560px] flex-col border border-[#2e2e2e] border-r-[#35b5d8] border-b-[#35b5d8] bg-linear-to-b from-[#98b3d1] to-[#b9d0e9] to-8% px-[7px] pb-[7px]">
            <h2 className="shrink-0 pt-[10px] font-['Noto_Sans','Noto_Sans_CJK_SC',sans-serif] leading-5">参数图</h2>
            <Drawing />
          </div>
        </div>
      </div>
    </section>
  );
}

function Workspace() {
  return (
    <div className="flex min-w-0 flex-1 flex-col">
      <div className="flex h-7 shrink-0 items-center gap-1.5 bg-linear-to-b from-[#fcfcfc] to-[#efefef] pl-1 text-black">
        <Tool icon={<NewIcon />} label="新建" caret />
        <Tool icon={<DeleteIcon />} label="删除" />
        <Tool icon={<CopyIcon />} label="复制" />
        <Tool icon={<RenameIcon />} label="重命名" />
        <div className="flex items-center gap-1">
          <Sep />
          <label htmlFor="floor">楼层</label>
          <div className="relative flex h-[22px] w-16 items-center bg-white">
            <select id="floor" className="h-full w-full appearance-none pl-1 outline-none">
              <option>基础层</option>
            </select>
            <span className="pointer-events-none absolute right-1"><Caret /></span>
          </div>
          <Sep />
        </div>
        <Tool icon={<SortIcon />} label="排序" caret />
        <Tool icon={<FilterIcon />} label="过滤" caret />
        <Sep />
        <Tool icon={<CopyFromIcon />} label="从其他楼层复制构件" />
        <Tool icon={<CopyToIcon />} label="复制构件到其他楼层" />
        <Sep />
        <Tool label="查找" caret />
        <Sep />
        <span className="flex items-center gap-2.5 pl-1">
          <button className="flex items-center gap-2"><UpIcon />上移</button>
          <button className="flex items-center gap-2"><DownIcon />下移</button>
        </span>
      </div>
      <div className="flex min-h-0 flex-1 gap-[3px]">
        <ComponentPanel />
        <EditorPanel />
      </div>
    </div>
  );
}

function StatusBar() {
  const cell = 'flex shrink-0 items-center border border-[#d0d0d0] bg-linear-to-b from-white to-[#efefef] px-px whitespace-nowrap';
  return (
    <footer className="flex h-5 shrink-0 gap-0.5 font-['Liberation_Serif','Noto_Sans_CJK_SC',serif]">
      <div className={`${cell} w-[148px]`} />
      <div className={`${cell} w-[78px]`}>层高:2.15m</div>
      <div className={`${cell} w-[98px]`}>底标高:-2.2m</div>
      <div className={`${cell} w-12`}>0</div>
      <div className={`${cell} min-w-0 flex-1`}>名称在当前层当前构件类型下不允许重名</div>
      <div className={`${cell} w-[70px]`}>720.1 FPS</div>
    </footer>
  );
}

const EGlyph = ({ color, children }: { color: string; children?: ReactNode }) => (
  <svg className="h-6 w-6" viewBox="0 0 24 24" fill="none" aria-hidden="true">
    <path d="M20 17a8.500 8.500 0 11.500-4.500H8" stroke={color} strokeWidth="4" />
    {children}
  </svg>
);

const pinned = [
  { name: 'Edge', icon: <svg className="h-6 w-6" viewBox="0 0 24 24" aria-hidden="true"><path d="M2 11C3 4 8 1.500 12.500 1.500c6 0 9.500 4 9.500 10V14H9c0 5 7 6 12 3v4.500C14 25 4 23 4 14.500 4 11 6.500 8.500 9 7.500 7 8.500 4 9 2 11zm7-1.500h7.500C16.500 5 9.500 5 9 9.500z" fill="#0f7bdc" /></svg> },
  { name: 'IE', icon: <EGlyph color="#3fa3ea"><path d="M3 21C-2 16 13 2 21 2c3 1 1 4 0 6" stroke="#f5cf3c" strokeWidth="2" /></EGlyph> },
  { name: '文件资源管理器', icon: <svg className="h-6 w-6" viewBox="0 0 24 24" aria-hidden="true"><path d="M1 3h8l1.500 2H23v16H1z" fill="#fbdf86" /><path d="M1 8h22v13H1z" fill="#ffe9a2" /><path d="M5 21v-8h14v8h-4v-4H9v4z" fill="#2f9fe0" /></svg> },
  { name: '360浏览器', run: true, icon: <svg className="h-6 w-6" viewBox="0 0 24 24" fill="none" aria-hidden="true"><circle cx="12" cy="12" r="10" fill="#55b82e" stroke="#e8f5e0" strokeWidth="1.500" /><path d="M17 15.500a6 6 0 11.500-3.500H7" stroke="#fff" strokeWidth="2.500" /><path d="M3 22C3 14 12 4 22 2" stroke="#8fdc4d" strokeWidth="1.500" /></svg> },
  { name: 'GGJ2013', run: true, active: true, icon: <Logo className="h-6 w-6" /> },
  { name: '广联达', run: true, icon: <svg className="h-6 w-6" viewBox="0 0 24 24" aria-hidden="true"><path d="M23 2c0 4-3 6-7 5.500-5-.5-9 1.500-9 6 0 3.500 2.500 6 6 6 3 0 5-1.800 5-4 0-2-2-3-3.500-2.500-1 .3-1.500 1.500-1 2.500-3-.5-3-6 2-6 4 0 7 2.500 7 6.500 0 4.500-4 7.500-9.500 7.500C6 23.500 1 19.500 1 13 1 6 6 2 13 2.500 17 3 20 4 23 2z" fill="#1693ec" /></svg> },
  { name: '记事', run: true, icon: <svg className="h-6 w-6" viewBox="0 0 24 24" fill="none" aria-hidden="true"><rect width="24" height="24" rx="3" fill="#f39a1b" /><path d="M3 5l13-2 3 16-13 2z" fill="#fff7e2" /><path d="M6 9l8-1M7 12l7-1M7 15l6-1" stroke="#b37928" /><path d="M22 2l-9 13-1 3 3-2 8-12z" fill="#b43a12" /></svg> },
  { name: '词典', run: true, icon: <svg className="h-6 w-6" viewBox="0 0 24 24" fill="none" aria-hidden="true"><rect width="24" height="24" rx="3" fill="#1f78d1" /><path d="M3 6h8l1 1 1-1h8v14h-8l-1 1-1-1H3z" fill="#f7fbff" /><path d="M12 7v13M6 16l2-6 2 6M14 12h5M14 15h5" stroke="#8a9db5" /><circle cx="16" cy="8" r="4" fill="#a9d3f7" stroke="#5a8fc4" strokeWidth="1.500" /></svg> },
];

function Taskbar() {
  return (
    <div className="flex h-10 shrink-0 items-stretch bg-[#020c10] text-[#f0f0f0]">
      <button aria-label="开始" className="flex w-12 shrink-0 items-center justify-center bg-black">
        <Svg><path d="M0 2.300L7 1.300v6.300H0zM8 1.200L16 0v7.600H8zM0 8.500h7v6.300l-7-1zM8 8.500h8V16l-8-1.200z" fill="#fff" /></Svg>
      </button>
      <div className="flex w-[344px] shrink-0 items-center bg-[#333] pl-2 pr-3">
        <svg className="h-6 w-6" viewBox="0 0 24 24" aria-hidden="true"><circle cx="12" cy="12" r="9.500" fill="none" stroke="#f2f2f2" strokeWidth="3" /></svg>
        <input aria-label="搜索" placeholder="在这里输入你要搜索的内容" className="ml-1 min-w-0 flex-1 bg-transparent text-sm outline-none placeholder:text-[#9a9a9a]" />
        <Svg className="h-[18px] w-[18px]"><rect x="5" y="1" width="6" height="9" rx="1" stroke="#a8a8a8" /><path d="M3 7v5h10V7M8 12v3M5 15.500h6" stroke="#a8a8a8" /></Svg>
      </div>
      <button aria-label="任务视图" className="flex w-12 shrink-0 items-center justify-center">
        <svg className="h-4 w-5" viewBox="0 0 20 16" fill="none" stroke="#f0f0f0" aria-hidden="true"><path d="M4.500 1.500h11v13h-11zM2.500 3.500h-2v9h2M17.500 3.500h2v9h-2" /></svg>
      </button>
      <button aria-label="360" className="flex w-[51px] shrink-0 items-center justify-center">
        <svg className="h-[22px] w-[22px]" viewBox="0 0 22 22" fill="#e6e6e6" aria-hidden="true"><path d="M10.500 10.500C4 11 1 8.500 1 5.500S3 1 5.500 1s5 3 5 9.500zM11.500 10.500C11 4 13.500 1 16.500 1S21 3 21 5.500s-3 5-9.500 5zM11.500 11.500c6.500-.5 9.500 2 9.500 5S19 21 16.500 21s-5-3-5-9.500zM10.500 11.500C11 18 8.500 21 5.500 21S1 19 1 16.500s3-5 9.500-5z" /><path d="M4 6c3-1 6 1 7 5s4 6 8 5M6 18c-1-3 1-6 5-7s6-4 5-8" fill="none" stroke="#020c10" /></svg>
      </button>
      <button aria-label="浏览器" className="flex w-[51px] shrink-0 items-center justify-center">
        <EGlyph color="#e6e6e6"><path d="M3 22C1 16 12 3 21 2" stroke="#e6e6e6" strokeWidth="1.500" /></EGlyph>
      </button>
      <button aria-label="提醒" className="relative flex w-[51px] shrink-0 items-center justify-center">
        <svg className="h-5 w-5" viewBox="0 0 20 20" fill="none" stroke="#dcdcdc" strokeWidth="1.400" aria-hidden="true"><path d="M18 3c-3 1-5-1-9-1-5 0-8 4-8 8s4 8 9 8 8-4 8-7-3-6-7-6-5 3-5 5 2 4 4 4 4-2 3-4-3-2-4 0" /></svg>
        <svg className="absolute top-1 right-2 h-[14px] w-3" viewBox="0 0 12 14" aria-hidden="true"><path d="M6 0c4 1 5 3 5 9l1 2H0l1-2c0-6 1-8 5-9zM4 12h4l-2 2z" fill="#f0a80e" /></svg>
      </button>
      <span className="mx-[6px] my-3 w-1 border-x border-[#3d4548]" />
      <div className="ml-[7px] flex shrink-0">
        {pinned.map((p) => (
          <button key={p.name} aria-label={p.name} className={`flex w-[38px] flex-col items-center ${p.active ? 'bg-[#394246]' : ''}`}>
            <span className="flex flex-1 items-center pt-0.5">{p.icon}</span>
            <span className={`h-0.5 ${p.active ? 'w-full' : 'w-[29px]'} ${p.run ? 'bg-[#76b9ed]' : ''}`} />
          </button>
        ))}
      </div>
      <span className="ml-[15px] my-3 w-1 border-x border-[#3d4548]" />
      <span className="ml-2.5 shrink-0 self-center">链接</span>
      <div className="ml-[19px] flex w-12 shrink-0 flex-col items-center justify-center leading-[17px] whitespace-nowrap">
        <span>13%</span>
        <span>CPU使用</span>
      </div>
      <div className="ml-auto flex shrink-0 items-center gap-[9px]">
        <svg className="h-2 w-3" viewBox="0 0 12 8" fill="none" stroke="#f0f0f0" strokeWidth="1.300" aria-hidden="true"><path d="M.5 7L6 1.500 11.500 7" /></svg>
        <Svg><path d="M5.500 5.500h9v6h-9z" fill="#fff" stroke="#fff" /><path d="M1 3v3h4V3M3 6v4h2M2 1.500V3M4 1.500V3" stroke="#fff" /></Svg>
        <Svg className="h-[15px] w-[15px]"><path d="M1 15A14 14 0 0115 1M4.500 15A10.500 10.500 0 0115 4.500M8 15a7 7 0 017-7" stroke="#c8c8c8" strokeWidth="1.500" /><circle cx="13" cy="13" r="2" fill="#fff" /></Svg>
        <Svg><path d="M1 5.500h3l3-3v11l-3-3H1z" stroke="#fff" /><path d="M9 6q1.500 2 0 4M11 4q3 4 0 8M13 2.500q4 5.500 0 11" stroke="#ccc" /></Svg>
        <svg className="h-[14px] w-[23px]" viewBox="0 0 23 14" fill="none" stroke="#fff" aria-hidden="true"><path d="M.5.500h22v13H.500z" /><path d="M3 4h17M3 7h17" strokeDasharray="1.500 1" /><path d="M6 10.500h11" /></svg>
        <span className="text-sm">中</span>
        <Sogou className="h-4 w-4" />
      </div>
      <div className="ml-4 flex w-[60px] shrink-0 flex-col items-center justify-center leading-[18px]">
        <span>20:21</span>
        <span>2018/4/6</span>
      </div>
      <button aria-label="通知" className="relative flex w-14 shrink-0 items-center justify-center bg-black">
        <Svg className="h-[18px] w-[18px]"><path d="M0 1h16v11H8l-3 3v-3H0z" fill="#fff" /><path d="M3 4h10M3 6.500h10M3 9h7" stroke="#000" /></Svg>
        <span className="absolute right-3 bottom-1 h-4 w-4 rounded-full border border-[#8a8a8a] bg-[#333] text-center text-[11px] leading-[14px] font-bold">1</span>
      </button>
      <span className="mr-1 w-px bg-[#5a5a5a]" />
    </div>
  );
}

export default function App() {
  return (
    <div className="relative flex h-screen w-full flex-col overflow-hidden bg-[#f0f0f0] font-['Noto_Sans','Noto_Sans_CJK_SC',sans-serif] text-xs leading-4 text-black">
      <TitleBar />
      <MenuBar />
      <Toolbar />
      <div className="flex min-h-0 flex-1 gap-1.5">
        <ModulePanel />
        <Workspace />
      </div>
      <StatusBar />
      <Taskbar />

      <ImeBar />
      <div className="absolute -top-[26px] left-[1114px] flex h-[45px] w-[45px] items-end justify-center rounded-full border-2 border-[#d5d5d5] bg-[#35bd60] pb-[3px] text-xs leading-3 font-bold text-white shadow-md ring-1 ring-[#9a9a9a]">
        60
      </div>
      {/* red marker circles */}
      <svg className="pointer-events-none absolute top-[118px] left-[497px] h-[84px] w-[252px]" viewBox="0 0 252 84" fill="none" stroke="#f00" strokeWidth="3" aria-hidden="true">
        <ellipse cx="126" cy="42" rx="124" ry="40" />
      </svg>
      <svg className="pointer-events-none absolute top-[474px] left-1 h-[52px] w-[141px]" viewBox="0 0 141 52" fill="none" stroke="#f00" strokeWidth="3" aria-hidden="true">
        <ellipse cx="70" cy="26" rx="68" ry="24" />
      </svg>
    </div>
  );
}
